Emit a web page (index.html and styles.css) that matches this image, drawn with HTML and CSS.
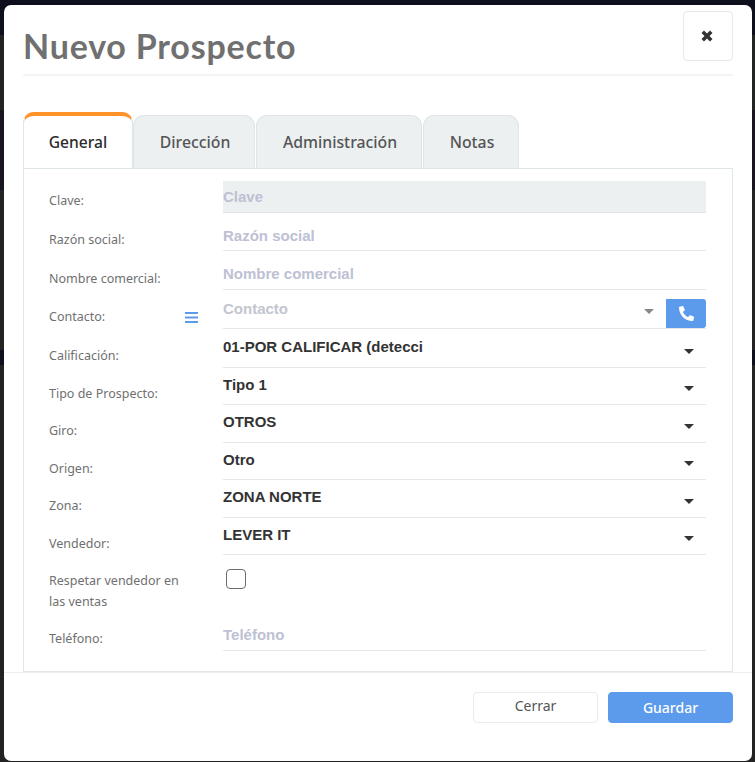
FILE: index.html
```html
<!DOCTYPE html>
<html lang="es">
<head>
<meta charset="utf-8">
<title>Nuevo Prospecto</title>
<link rel="stylesheet" href="styles.css">
</head>
<body>
<div class="modal">
  <header class="modal-header">
    <h1 class="modal-title">Nuevo Prospecto</h1>
    <button class="close-btn" type="button" aria-label="Cerrar">
      <svg width="12" height="12" viewBox="0 0 12 12"><path d="M0.500 3l2.500-2.500 3 3 3-3 2.500 2.500-3 3 3 3-2.500 2.500-3-3-3 3-2.500-2.500 3-3z" fill="#333"/></svg>
    </button>
  </header>
  <nav class="tabs">
    <div class="tab tab-active tab-general">General</div>
    <div class="tab tab-direccion">Dirección</div>
    <div class="tab tab-admin">Administración</div>
    <div class="tab tab-notas">Notas</div>
  </nav>
  <section class="pane">
    <div class="row row-first"><div class="label">Clave:</div><div class="control input disabled">Clave</div></div>
    <div class="row row-tall"><div class="label">Razón social:</div><div class="control input">Razón social</div></div>
    <div class="row row-tall"><div class="label">Nombre comercial:</div><div class="control input">Nombre comercial</div></div>
    <div class="row row-tall"><div class="label label-menu">Contacto:
        <svg class="menu-icon" width="13" height="11" viewBox="0 0 13 11"><path d="M0 1h13M0 5.500h13M0 10h13" stroke="#5c9bec" stroke-width="2"/></svg></div>
      <div class="control select placeholder-select">Contacto
        <span class="caret caret-muted"></span>
        <span class="phone-btn"><svg width="15" height="15" viewBox="0 0 512 512"><path fill="#fff" d="M493 24 389 0c-11-3-23 3-27 14l-48 112c-4 10-1 21 7 28l60 50c-36 77-99 140-177 177l-50-60c-7-8-18-11-28-7L14 362c-11 5-17 16-14 27l24 104c3 11 12 19 23 19 257 0 465-208 465-465 0-11-8-20-19-23z" transform="matrix(-1 0 0 1 512 0)"/></svg></span>
      </div></div>
    <div class="row row-tall"><div class="label">Calificación:</div><div class="control select">01-POR CALIFICAR (detecci<span class="caret"></span></div></div>
    <div class="row row-select"><div class="label">Tipo de Prospecto:</div><div class="control select">Tipo 1<span class="caret"></span></div></div>
    <div class="row row-select"><div class="label">Giro:</div><div class="control select">OTROS<span class="caret"></span></div></div>
    <div class="row row-select"><div class="label">Origen:</div><div class="control select">Otro<span class="caret"></span></div></div>
    <div class="row row-select"><div class="label">Zona:</div><div class="control select">ZONA NORTE<span class="caret"></span></div></div>
    <div class="row row-select"><div class="label">Vendedor:</div><div class="control select">LEVER IT<span class="caret"></span></div></div>
    <div class="row row-check"><div class="label label-wrap">Respetar vendedor en las ventas</div><div class="check-cell"><span class="checkbox"></span></div></div>
    <div class="row row-last"><div class="label">Teléfono:</div><div class="control input">Teléfono</div></div>
  </section>
  <footer class="modal-footer">
    <button class="btn btn-light" type="button">Cerrar</button>
    <button class="btn btn-primary" type="button">Guardar</button>
  </footer>
</div>
</body>
</html>
```
FILE: styles.css
```css
* { box-sizing: border-box; }
html, body { margin: 0; height: 100%; }
body {
  background: linear-gradient(to bottom,
    #0d0f1c 0, #0d0f1c 35px,
    #222323 35px, #222323 110px,
    #1a1420 110px, #1a1420 190px,
    #232323 190px, #232323 350px,
    #0d0f1c 350px, #0d0f1c 365px,
    #232323 365px);
  font-family: "Noto Sans", sans-serif;
  overflow: hidden;
}
.modal {
  width: 748px;
  height: 756px;
  margin: 5px 0 0 4px;
  background: #fff;
  border-radius: 7px;
  display: flex;
  flex-direction: column;
}
.modal-header {
  margin: 0 19px 0 19px;
  height: 71px;
  border-bottom: 2px solid #f3f4f4;
  display: flex;
  justify-content: space-between;
  align-items: flex-start;
}
.modal-title {
  margin: 19px 0 0 0;
  font-family: "Lato", sans-serif;
  font-size: 34px;
  line-height: 44px;
  font-weight: 700;
  letter-spacing: 0.8px;
  color: #707070;
}
.close-btn {
  width: 50px;
  height: 50px;
  margin-top: 6px;
  background: #fff;
  border: 1px solid #e6e8e9;
  border-radius: 4px;
  display: flex;
  align-items: center;
  justify-content: center;
  padding: 0 2px 0 0;
}
.tabs {
  margin: 36px 0 0 19px;
  height: 57px;
  display: flex;
  align-items: flex-end;
  gap: 1px;
}
.tab {
  height: 54px;
  padding-left: 2px;
  background: #ecf0f1;
  border: 1px solid #dfe6e9;
  border-bottom: 0;
  border-radius: 11px 11px 0 0;
  font-size: 15.800px;
  font-weight: 500;
  color: #555;
  text-align: center;
  line-height: 52px;
}
.tab-active {
  height: 57px;
  padding-left: 0;
  background: #fff;
  border: 1px solid #dfe6e9;
  border-top: 4px solid #ff9329;
  border-bottom: 0;
  color: #2b2b2b;
  font-size: 15.600px;
  line-height: 52px;
}
.tab-general { width: 110px; margin-right: -1px; }
.tab-direccion { width: 122px; }
.tab-admin { width: 166px; }
.tab-notas { width: 96px; }
.pane {
  margin: -1px 19px 0;
  height: 505px;
  padding: 12px 26px 0 25px;
  border: 1px solid #dfe6e9;
  border-bottom: 2px solid #e3e5e6;
  display: flex;
  flex-direction: column;
}
.row {
  display: grid;
  grid-template-columns: 174px 483px;
  align-items: start;
}
.row-first { height: 31.500px; }
.row-tall { height: 38.750px; }
.row-select { height: 37.500px; }
.row-check { height: 60px; }
.row-last { height: 36px; }
.label {
  font-size: 12.500px;
  line-height: 16px;
  color: #707070;
}
.row-first .label { padding-top: 12px; }
.row-tall .label { padding-top: 19.250px; }
.row-select .label { padding-top: 18.250px; }
.row-last .label { padding-top: 16px; }
.row .label-menu { display: flex; justify-content: space-between; padding-right: 25px; align-items: center; }
.row .label-wrap { padding: 15px 30px 0 0; line-height: 21px; }
.control {
  position: relative;
  height: 100%;
  font-family: "Liberation Sans", sans-serif;
  font-size: 15px;
  font-weight: 700;
  line-height: 16px;
  border-bottom: 1px solid #e3e8ea;
}
.input { color: #bdc1d3; padding-top: 15px; }
.row-first .input { padding-top: 8px; }
.row-last .input { padding-top: 12px; }
.disabled { background: #ecf0f1; border-bottom-color: #dfe6e9; }
.select { color: #333; padding-top: 9px; }
.row-tall .select { padding-top: 10.500px; }
.row-tall .placeholder-select { color: #c2c6cf; }
.caret {
  position: absolute;
  right: 12px;
  bottom: 13px;
  width: 0;
  height: 0;
  border-left: 5px solid transparent;
  border-right: 5px solid transparent;
  border-top: 5px solid #333;
}
.caret-muted { right: 52px; bottom: 14px; border-top-color: #888; }
.phone-btn {
  position: absolute;
  right: 0;
  bottom: 0;
  width: 40px;
  height: 29px;
  background: #5c9bec;
  border-radius: 0 3px 3px 0;
  display: flex;
  align-items: center;
  justify-content: center;
}
.check-cell { padding: 14px 0 0 3px; }
.checkbox {
  display: block;
  width: 20px;
  height: 20px;
  border: 1px solid #6b6b6b;
  border-radius: 4px;
  background: #fff;
}
.modal-footer {
  border-top: 1px solid #eceeef;
  margin-top: -1px;
  padding: 19px 19px 0 0;
  display: flex;
  justify-content: flex-end;
  gap: 10px;
}
.btn {
  width: 125px;
  height: 31px;
  border-radius: 4px;
  font-family: "Noto Sans", sans-serif;
  font-size: 14px;
  padding: 0;
}
.btn-light { background: #fff; border: 1px solid #e9ebec; color: #555; padding-bottom: 4px; }
.btn-primary { background: #5c9bec; border: 1px solid #5c9bec; color: #fff; font-weight: 500; }
```
